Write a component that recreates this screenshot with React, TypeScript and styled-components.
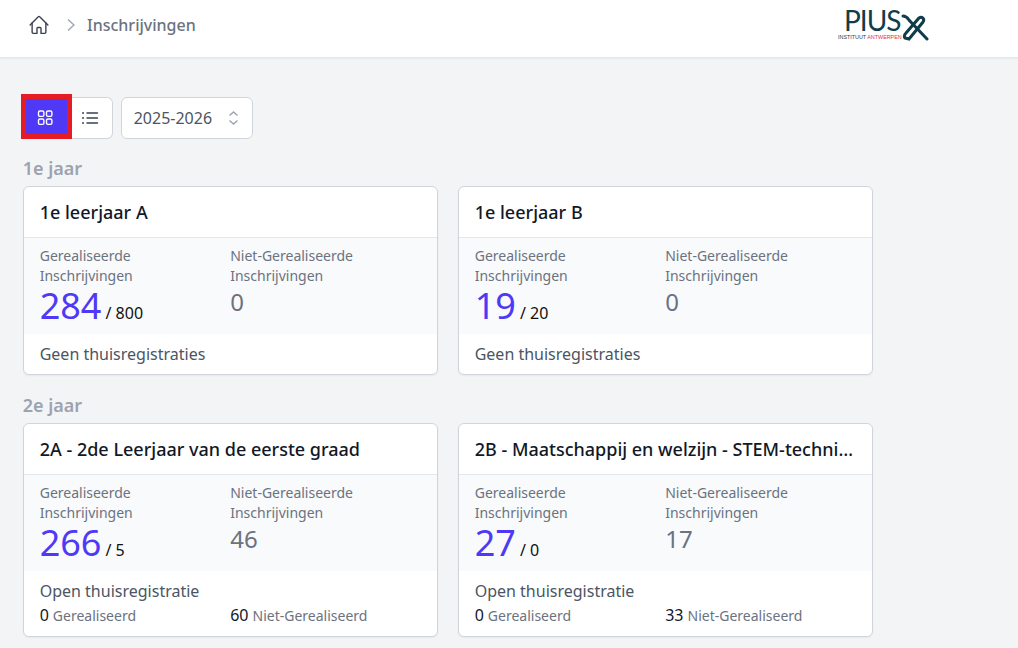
import { createGlobalStyle } from "styled-components";
import styled from "styled-components";

const GlobalStyle = createGlobalStyle`
	html, body {
		margin: 0;
		padding: 0;
		height: 100%;
		overflow: hidden;
		background-color: #f3f4f6;
		font-family: "Noto Sans", sans-serif;
	}
	* {
		box-sizing: border-box;
	}
`;

const Header = styled.header`
	height: 58px;
	display: flex;
	align-items: center;
	padding: 0 0 8px 28px;
	background-color: white;
	border-bottom: 1px solid #e5e7eb;
	box-shadow: 0 1px 2px rgba(0, 0, 0, 0.05);
`;

const Crumb = styled.span`
	width: 109px;
	margin-left: 10px;
	font-size: 16px;
	font-weight: 500;
	color: #6b7280;
`;

const ChevronBox = styled.span`
	display: flex;
	margin-left: 15px;
	color: #9ca3af;
`;

const Logo = styled.div`
	position: relative;
	margin-left: 640px;
	width: 92px;
	height: 44px;
	top: 4px;
`;

const LogoName = styled.span`
	position: absolute;
	left: 8px;
	top: -3px;
	font-family: Lato, sans-serif;
	font-size: 28px;
	line-height: 32px;
	letter-spacing: -1px;
	color: #0f3d4a;
`;

const LogoSub = styled.span`
	position: absolute;
	left: 2px;
	top: 26px;
	font-family: "Liberation Sans", sans-serif;
	font-size: 5.4px;
	line-height: 8px;
	white-space: nowrap;
	color: #1f3b4d;
`;

const LogoRed = styled.span`
	color: #e5352d;
`;

const LogoMark = styled.svg`
	position: absolute;
	left: 65px;
	top: 5px;
`;

const Main = styled.main`
	padding: 39px 23px 0 22.7px;
`;

const Toolbar = styled.div`
	display: flex;
	align-items: center;
	margin-bottom: 17px;
`;

const ViewButton = styled.button<{ $active?: boolean }>`
	position: relative;
	width: ${(props) => (props.$active ? "47px" : "43px")};
	height: 42px;
	display: flex;
	align-items: center;
	justify-content: center;
	padding: 0;
	background-color: ${(props) => (props.$active ? "#4f39f6" : "white")};
	color: ${(props) => (props.$active ? "white" : "#374151")};
	border: ${(props) => (props.$active ? "none" : "1px solid #d1d5db")};
	border-left: none;
	border-radius: ${(props) => (props.$active ? "0" : "0 6px 6px 0")};
`;

const Highlight = styled.span`
	position: absolute;
	left: -2px;
	top: -3px;
	width: 51px;
	height: 45px;
	border: 5px solid #e51c23;
	z-index: 1;
`;

const YearSelect = styled.div`
	width: 132px;
	height: 42px;
	margin-left: 8px;
	display: flex;
	align-items: center;
	justify-content: space-between;
	padding: 0 12px;
	background-color: white;
	border: 1px solid #d1d5db;
	border-radius: 6px;
	font-size: 16px;
	color: #4b5563;
`;

const SelectIcon = styled.span`
	display: flex;
	color: #9ca3af;
`;

const YearTitle = styled.h2`
	margin: 0 0 6px;
	font-size: 18px;
	line-height: 24px;
	font-weight: 600;
	color: #9ca3af;
`;

const Grid = styled.div`
	display: grid;
	grid-template-columns: repeat(2, 415px);
	gap: 20px;
	margin-bottom: 18px;
`;

const Card = styled.section`
	background-color: white;
	border: 1px solid #d1d5db;
	border-radius: 6px;
	box-shadow: 0 1px 2px rgba(0, 0, 0, 0.05);
	overflow: hidden;
`;

const CardTitle = styled.h3`
	margin: 0;
	height: 51px;
	padding: 0 16px;
	font-size: 18px;
	line-height: 50px;
	font-weight: 500;
	color: #111827;
	border-bottom: 1px solid #e5e7eb;
	white-space: nowrap;
	overflow: hidden;
	text-overflow: ellipsis;
`;

const Stats = styled.div`
	display: grid;
	grid-template-columns: 1fr 1fr;
	height: 96px;
	padding: 8px 16px 0;
	background-color: #f9fafb;
`;

const StatLabel = styled.div`
	font-size: 14px;
	line-height: 20px;
	color: #6b7280;
`;

const StatLine = styled.div`
	display: flex;
	align-items: baseline;
	height: 38px;
`;

const StatNumber = styled.span<{ $primary?: boolean }>`
	font-size: ${(props) => (props.$primary ? "36px" : "24px")};
	line-height: ${(props) => (props.$primary ? "40px" : "32px")};
	color: ${(props) => (props.$primary ? "#4f39f6" : "#6b7280")};
`;

const StatTotal = styled.span`
	margin-left: 4px;
	font-size: 16px;
	color: #111;
`;

const CardFooter = styled.div`
	padding: 8px 16px;
	font-size: 16px;
	line-height: 24px;
	color: #4b5563;
`;

const HomeRow = styled.div`
	display: grid;
	grid-template-columns: 1fr 1fr;
	font-size: 16px;
	line-height: 24px;
	color: #111827;
`;

const HomeLabel = styled.span`
	margin-left: 4px;
	font-size: 14px;
	color: #6b7280;
`;

type Registrations = { done: number; open: number };

type Course = {
	title: string;
	realised: number;
	total: number;
	notRealised: number;
	home?: Registrations;
};

const years: { title: string; courses: Course[] }[] = [
	{
		title: "1e jaar",
		courses: [
			{ title: "1e leerjaar A", realised: 284, total: 800, notRealised: 0 },
			{ title: "1e leerjaar B", realised: 19, total: 20, notRealised: 0 },
		],
	},
	{
		title: "2e jaar",
		courses: [
			{
				title: "2A - 2de Leerjaar van de eerste graad",
				realised: 266,
				total: 5,
				notRealised: 46,
				home: { done: 0, open: 60 },
			},
			{
				title: "2B - Maatschappij en welzijn - STEM-technieken",
				realised: 27,
				total: 0,
				notRealised: 17,
				home: { done: 0, open: 33 },
			},
		],
	},
];

function CourseCard({ course }: { course: Course }) {
	return (
		<Card>
			<CardTitle>{course.title}</CardTitle>
			<Stats>
				<div>
					<StatLabel>
						Gerealiseerde
						<br />
						Inschrijvingen
					</StatLabel>
					<StatLine>
						<StatNumber $primary>{course.realised}</StatNumber>
						<StatTotal>/ {course.total}</StatTotal>
					</StatLine>
				</div>
				<div>
					<StatLabel>
						Niet-Gerealiseerde
						<br />
						Inschrijvingen
					</StatLabel>
					<StatLine>
						<StatNumber>{course.notRealised}</StatNumber>
					</StatLine>
				</div>
			</Stats>
			{course.home ? (
				<CardFooter>
					Open thuisregistratie
					<HomeRow>
						<div>
							{course.home.done}
							<HomeLabel>Gerealiseerd</HomeLabel>
						</div>
						<div>
							{course.home.open}
							<HomeLabel>Niet-Gerealiseerd</HomeLabel>
						</div>
					</HomeRow>
				</CardFooter>
			) : (
				<CardFooter>Geen thuisregistraties</CardFooter>
			)}
		</Card>
	);
}

function App() {
	return (
		<>
			<GlobalStyle />
			<Header>
				<svg width="22" height="22" viewBox="0 0 24 24" fill="none" stroke="#374151" strokeWidth="1.5" strokeLinecap="round" strokeLinejoin="round">
					<path d="M2.3 12 11.2 3a1.1 1.1 0 0 1 1.6 0l8.9 9" />
					<path d="M4.5 9.8V20a1.2 1.2 0 0 0 1.2 1.2h4.1v-5.5a1 1 0 0 1 1-1h2.4a1 1 0 0 1 1 1v5.5h4.1a1.2 1.2 0 0 0 1.2-1.2V9.8" />
				</svg>
				<ChevronBox>
					<svg width="12" height="14" viewBox="0 0 12 14" fill="none" stroke="currentColor" strokeWidth="1.3">
						<path d="m3 1.5 6 5.5-6 5.5" />
					</svg>
				</ChevronBox>
				<Crumb>Inschrijvingen</Crumb>
				<Logo>
					<LogoName>PIUS</LogoName>
					<LogoSub>
						INSTITUUT <LogoRed>ANTWERPEN</LogoRed>
					</LogoSub>
					<LogoMark width="28" height="30" viewBox="0 0 28 30" fill="none" stroke="#0f3d4a" strokeWidth="3" strokeLinecap="round">
						<path d="M26 27 8 8C6 5 3 4 2 4" />
						<path d="M4 26 8 27 22 10c2-3-1-6-4-4L5 21c-2 2-2 4-1 5" />
					</LogoMark>
				</Logo>
			</Header>
			<Main>
				<Toolbar>
					<ViewButton $active aria-label="Tegels">
						<Highlight />
						<svg width="18" height="18" viewBox="0 0 18 18" fill="none" stroke="currentColor" strokeWidth="1.4">
							<rect x="1.5" y="2" width="5.4" height="5.4" rx="1.4" />
							<rect x="9.5" y="2" width="5.4" height="5.4" rx="1.4" />
							<rect x="1.5" y="10" width="5.4" height="5.4" rx="1.4" />
							<rect x="9.5" y="10" width="5.4" height="5.4" rx="1.4" />
						</svg>
					</ViewButton>
					<ViewButton aria-label="Lijst">
						<svg width="18" height="18" viewBox="0 0 18 18" fill="none" stroke="currentColor" strokeWidth="1.4" strokeLinecap="round">
							<path d="M5 4h10.5M5 9h10.5M5 14h10.5" />
							<path d="M1 4h.1M1 9h.1M1 14h.1" strokeWidth="1.8" />
						</svg>
					</ViewButton>
					<YearSelect>
						2025-2026
						<SelectIcon>
							<svg width="14" height="18" viewBox="0 0 14 18" fill="none" stroke="currentColor" strokeWidth="1.4">
								<path d="m3.5 6.5 4-3.5 4 3.5M3.5 11.5l4 3.5 4-3.5" />
							</svg>
						</SelectIcon>
					</YearSelect>
				</Toolbar>
				{years.map((year) => (
					<div key={year.title}>
						<YearTitle>{year.title}</YearTitle>
						<Grid>
							{year.courses.map((course) => (
								<CourseCard key={course.title} course={course} />
							))}
						</Grid>
					</div>
				))}
			</Main>
		</>
	);
}

export default App;
